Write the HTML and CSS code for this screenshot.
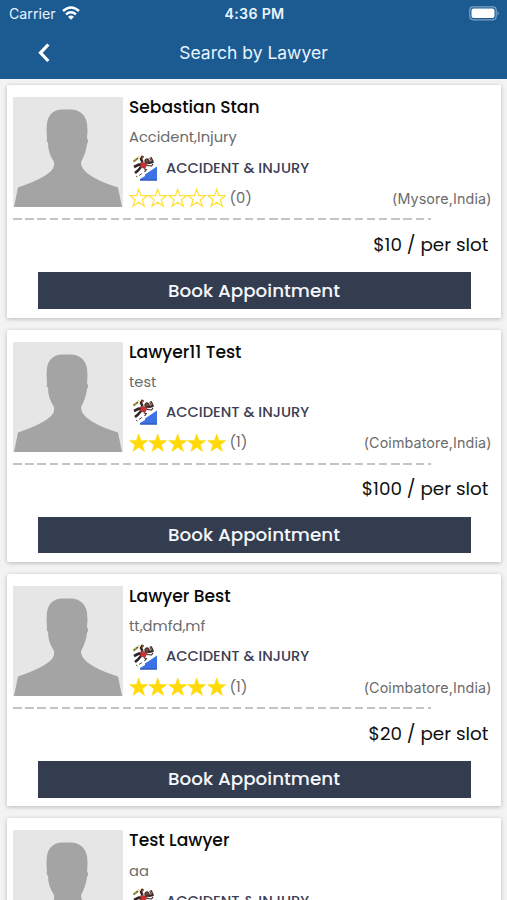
FILE: index.html
```html
<!DOCTYPE html>
<html lang="en">
<head>
<meta charset="utf-8">
<title>Search by Lawyer</title>
<link rel="stylesheet" href="styles.css">
</head>
<body>
<svg class="defs" width="0" height="0" aria-hidden="true">
  <symbol id="person" viewBox="0 0 110 110">
    <path fill="#a4a4a4" d="M1 110L5 90.500Q30 82 38 74Q42 70 41 65Q35 56 35 46Q33 44 34 41Q33 33 34 26Q36 13 49 12.500H58Q71 13 74 26Q75 34 74 41Q76 44 74 47Q73 56 68 65Q68 71 74 76Q84 84 105 90.500L109 110Z"/>
  </symbol>
  <symbol id="star" viewBox="0 0 20 20">
    <path d="M10 .9L12.300 7.600H19.200L13.700 11.800L15.800 18.500L10 14.400L4.200 18.500L6.300 11.800L.8 7.600H7.700Z"/>
  </symbol>
  <symbol id="accident" viewBox="0 0 26 26">
    <path d="M8 25.500V24L13 21V19.500L25 11.500V25.500Z" fill="#3c72e6"/>
    <path d="M8 25H25" stroke="#2850ae"/>
    <path d="M1.500 6.500L6 3" stroke="#6d6b24" stroke-width="2"/>
    <path d="M2.500 5.500L4.500 4M6 1.500L7.500 2" stroke="#d6bd36"/>
    <g fill="none" stroke-linejoin="round">
      <path d="M10.500 7L9 4L11 1M16 8L20.500 7L18.500 2.500M10 10L7 9.500L2 12M9 12L6 15.500L3 18" stroke="#332525" stroke-width="2.600"/>
      <path d="M10 4L11 1.500M20 6.500L18.500 3" stroke="#b5754b"/>
      <path d="M15 10.500L19.500 11L21 9M12 14L14.500 14.500L12.500 17" stroke="#3c2925" stroke-width="1.200"/>
    </g>
    <path d="M9 7L15.500 8.500L13 13.500L8 12Z" fill="#d32e30" stroke="#46262a" stroke-width=".5"/>
    <circle cx="15" cy="6" r="2.200" fill="#7d4b32" stroke="#302321"/>
    <path d="M7 20.500L10 18.500M4 21L5.500 22" stroke="#55545a"/>
  </symbol>
</svg>
<header class="header">
  <div class="status">
    <div class="carrier">Carrier
      <svg class="wifi" viewBox="0 0 18 14" fill="none" stroke="#fff" stroke-width="2.400"><path d="M1 5Q9-2 17 5M4 8.300Q9 4 14 8.300"/><path fill="#fff" stroke="none" d="M6 10.800Q9 8.300 12 10.800L9 13.800Z"/></svg>
    </div>
    <div class="time">4:36 PM</div>
    <svg class="battery" viewBox="0 0 31 15"><rect x=".8" y=".8" width="26.400" height="13" rx="3.500" fill="none" stroke="#7ba3c6" stroke-width="1.200"/><rect x="2.500" y="2.500" width="23" height="9.600" rx="2" fill="#fff"/><path d="M28.500 5Q31 7.300 28.500 9.600Z" fill="#7ba3c6"/></svg>
  </div>
  <div class="nav">
    <svg class="back" viewBox="0 0 12 20" fill="none" stroke="#fff" stroke-width="3.200"><path d="M10.300 1.500L2.500 9.800L10.300 18"/></svg>
    <h1 class="title">Search by Lawyer</h1>
  </div>
</header>
<main class="list" id="list"></main>
<script src="app.js"></script>
</body>
</html>
```
FILE: styles.css
```css
* { box-sizing: border-box; }
body {
  margin: 0;
  height: 900px;
  overflow: hidden;
  background: #f3f3f4;
  font-family: Poppins, Inter, sans-serif;
  color: #111;
}
.defs { display: block; height: 0; }
.header {
  height: 79px;
  background: #1c5b91;
  color: #e9f4ff;
  font-family: Inter, sans-serif;
}
.status {
  display: grid;
  grid-template-columns: 1fr auto 1fr;
  align-items: center;
  height: 27px;
  padding: 0 7px 0 9px;
}
.carrier { display: flex; align-items: center; gap: 6px; font-size: 14.200px; }
.wifi { width: 18px; height: 14px; margin-top: -2px; }
.time { font-size: 14.200px; font-weight: 600; letter-spacing: .3px; }
.battery { justify-self: end; width: 31px; height: 15px; }
.nav {
  display: grid;
  grid-template-columns: 1fr auto 1fr;
  align-items: center;
  height: 52px;
}
.back { width: 12px; height: 20px; margin: -1px 0 0 37.500px; }
.title { margin: 0; font-size: 17.500px; font-weight: 400; line-height: 24px; white-space: nowrap; }
.list {
  display: flex;
  flex-direction: column;
  gap: 12px;
  padding: 6.300px 6.500px 0 7px;
}
.card {
  flex: none;
  height: 232.400px;
  padding: 12px 0 0 6px;
  background: #fff;
  border-radius: 1.500px;
  box-shadow: 0 1px 4px rgba(0, 0, 0, .25);
}
.summary { display: grid; grid-template-columns: 110px 1fr; column-gap: 6px; height: 110px; }
.photo { width: 110px; height: 110px; background: #e6e6e6; }
.photo svg { display: block; width: 110px; height: 110px; }
.info { display: flex; flex-direction: column; white-space: nowrap; }
.name { margin: 0; height: 20px; line-height: 20px; font-size: 17.100px; font-weight: 500; color: #090909; }
.skills { height: 20px; margin-top: 10.200px; line-height: 20px; font-size: 14.700px; color: #6b6b6b; }
.category { display: flex; align-items: center; gap: 8px; height: 28px; margin-top: 6.600px; padding-left: 3px; font-size: 14.650px; font-weight: 500; color: #3b4053; }
.category svg { width: 26px; height: 26px; }
.meta { display: flex; align-items: center; height: 26px; margin-top: 3.200px; padding-right: 9px; color: #6b6b6b; font-size: 14.700px; }
.stars { display: flex; margin-right: 3.500px; }
.stars svg { width: 19.400px; height: 20px; fill: none; stroke: #ffe23d; stroke-width: 1.300; overflow: visible; }
.stars .full { fill: #ffda08; stroke: #ffda08; stroke-width: .8; }
.place { margin-left: auto; font-family: Inter, sans-serif; font-size: 14.300px; letter-spacing: .12px; }
.divider {
  width: 418px;
  height: 2px;
  margin-top: 11px;
  background: repeating-linear-gradient(90deg, #c4c4c4 0 8.500px, transparent 8.500px 12.200px);
}
.price { height: 28px; margin-top: 10.500px; padding-right: 12px; text-align: right; line-height: 28px; font-size: 18.350px; }
.book {
  display: block;
  width: 433px;
  height: 36.500px;
  margin: 13.500px 0 0 24.500px;
  padding: 0;
  border: 0;
  background: #343d4f;
  color: #f4f7fc;
  font: 500 18.350px/36px Poppins, Inter, sans-serif;
}
```
FILE: app.js
```js
const lawyers = [
  { name: "Sebastian Stan", skills: "Accident,Injury", rating: 0, reviews: 0, place: "Mysore", price: 10 },
  { name: "Lawyer11 Test", skills: "test", rating: 5, reviews: 1, place: "Coimbatore", price: 100 },
  { name: "Lawyer Best", skills: "tt,dmfd,mf", rating: 5, reviews: 1, place: "Coimbatore", price: 20 },
  { name: "Test Lawyer", skills: "aa" }
];
const stars = n => Array.from({ length: 5 }, (_, i) => `<svg class="${i < n ? "full" : "empty"}"><use href="#star"/></svg>`).join("");
const details = l => `
    <div class="divider"></div>
    <div class="price">$${l.price} / per slot</div>
    <button class="book">Book Appointment</button>`;
const meta = l => `<div class="meta"><div class="stars">${stars(l.rating)}</div><span>(${l.reviews})</span><span class="place">(${l.place},India)</span></div>`;
document.getElementById("list").innerHTML = lawyers.map(l => `
  <article class="card">
    <div class="summary">
      <div class="photo"><svg><use href="#person"/></svg></div>
      <div class="info">
        <h2 class="name">${l.name}</h2>
        <div class="skills">${l.skills}</div>
        <div class="category"><svg><use href="#accident"/></svg><span>ACCIDENT &amp; INJURY</span></div>
        ${l.place ? meta(l) : ""}
      </div>
    </div>
    ${l.price ? details(l) : ""}
  </article>`).join("");
```
